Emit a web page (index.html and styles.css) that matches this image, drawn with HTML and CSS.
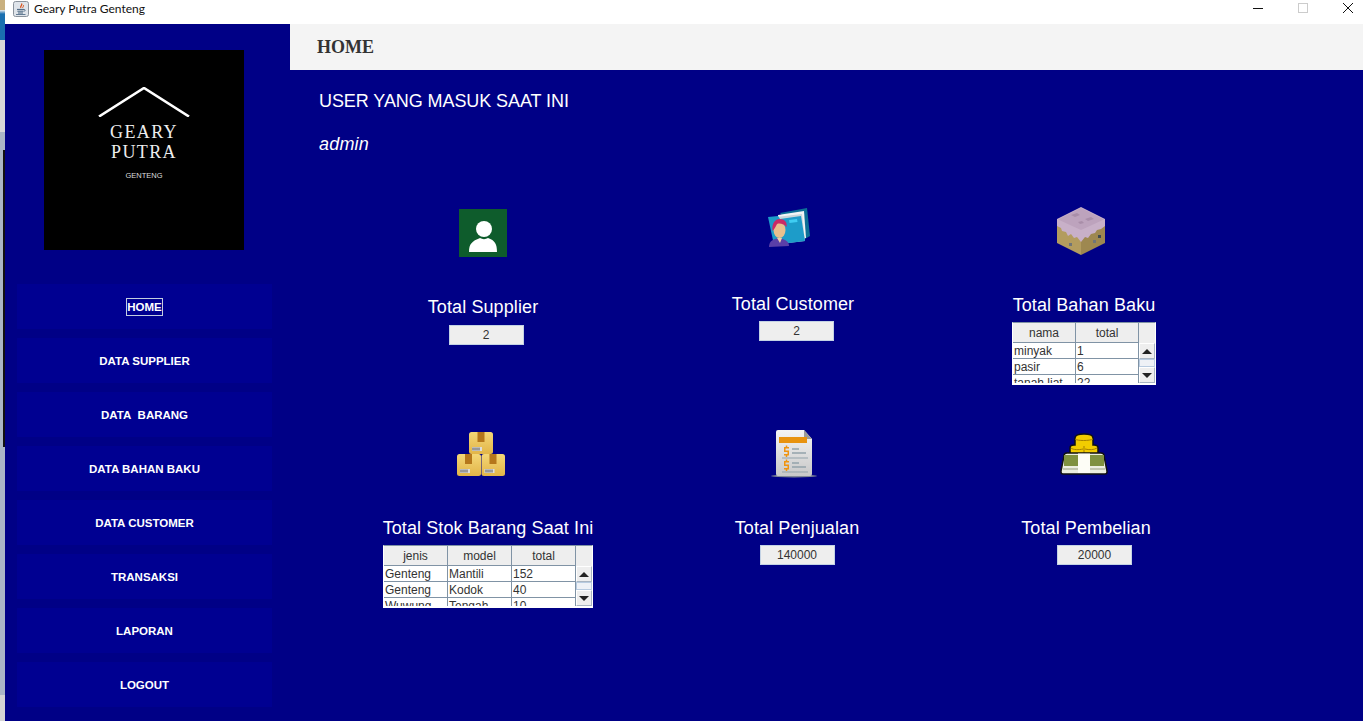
FILE: index.html
```html
<!DOCTYPE html>
<html lang="en">
<head>
    <meta charset="UTF-8">
    <meta name="viewport" content="width=device-width, initial-scale=1.0">
    <title>Geary Putra Genteng</title>
    <link rel="stylesheet" href="styles.css">
</head>
<body>
    <div class="desk-strip"></div>

    <div class="window">
        <div class="titlebar">
            <svg class="java-icon" width="16" height="16" viewBox="0 0 16 16">
                <rect x="0.5" y="0.5" width="15" height="15" rx="2" fill="#dfe4ea" stroke="#8a929c"/>
                <path d="M8.5 2.5c1.5 1.6-1.8 2.6-.6 4.4" fill="none" stroke="#d9531e" stroke-width="1.3"/>
                <path d="M10.4 4.2c.8 1.2-1.2 1.8-.6 2.8" fill="none" stroke="#d9531e" stroke-width="1"/>
                <path d="M4 8.4h7M4.4 10.2h6.2M5 12h5" stroke="#44617d" stroke-width="1"/>
                <path d="M11 8.4c1.6 0 1.6 1.8 0 1.8" fill="none" stroke="#44617d" stroke-width=".8"/>
                <path d="M3 13.5h9.5" stroke="#44617d" stroke-width=".8"/>
            </svg>
            <span class="title-text">Geary Putra Genteng</span>
            <div class="win-controls">
                <svg width="10" height="10" viewBox="0 0 10 10"><path d="M0 5.5h10" stroke="#111" stroke-width="1"/></svg>
                <svg width="10" height="10" viewBox="0 0 10 10"><rect x="0.5" y="0.5" width="9" height="9" fill="none" stroke="#ccc"/></svg>
                <svg width="10" height="10" viewBox="0 0 10 10"><path d="M0 0l10 10M10 0L0 10" stroke="#111" stroke-width="1"/></svg>
            </div>
        </div>

        <div class="window-body">
            <aside class="sidebar">
                <div class="logo">
                    <svg class="logo-roof" width="92" height="30" viewBox="0 0 92 30">
                        <path d="M1 29.500L46 1l45 28.500" fill="none" stroke="#fff" stroke-width="2.600"/>
                    </svg>
                    <div class="logo-name">GEARY<br>PUTRA</div>
                    <div class="logo-sub">GENTENG</div>
                </div>

                <nav class="menu">
                    <a class="menu-btn" href="#"><span class="focused">HOME</span></a>
                    <a class="menu-btn" href="#">DATA SUPPLIER</a>
                    <a class="menu-btn" href="#">DATA&nbsp; BARANG</a>
                    <a class="menu-btn" href="#">DATA BAHAN BAKU</a>
                    <a class="menu-btn" href="#">DATA CUSTOMER</a>
                    <a class="menu-btn" href="#">TRANSAKSI</a>
                    <a class="menu-btn" href="#">LAPORAN</a>
                    <a class="menu-btn" href="#">LOGOUT</a>
                </nav>
            </aside>

            <div class="content">
                <header class="page-head">HOME</header>

                <main class="main">
                    <div class="user-title">USER YANG MASUK SAAT INI</div>
                    <div class="user-name">admin</div>

                    <div class="tiles">
                        <section class="tile tile-supplier">
                            <svg class="icon" width="48" height="48" viewBox="0 0 48 48">
                                <rect width="48" height="48" fill="#0e5c2c"/>
                                <circle cx="25" cy="20" r="8" fill="#fff"/>
                                <path d="M10 43c0-8 3-11 11-14 2.500 1.500 5.500 1.500 8 0 7 2.500 9 6 9 14z" fill="#fff"/>
                            </svg>
                            <div class="tile-label">Total Supplier</div>
                            <div class="value-box">2</div>
                        </section>

                        <section class="tile tile-customer">
                            <svg class="icon" width="42" height="39" viewBox="0 0 42 39">
                                <path d="M12 5L39 0l3 28-7 4z" fill="#0d6f96"/>
                                <path d="M10 7l26-4 2 27-26 3z" fill="#f2f5f6"/>
                                <path d="M8 9l26-3 3 27-26 3z" fill="#c9d6db"/>
                                <path d="M0 9l10-1 2 3 21-3 4 25-31 4z" fill="#1d9cc9"/>
                                <path d="M21 12l8-1 .5 3-8 1z" fill="#3fcdf2"/>
                                <path d="M1 39c0-6 4-8 10-9 5 1 10 3 10 8z" fill="#5a3fa8"/>
                                <path d="M9 30l3 5 2-5z" fill="#f0d0a8"/>
                                <ellipse cx="11.500" cy="22" rx="6" ry="8" fill="#e9c08e"/>
                                <path d="M4.500 23c-1-8 3-12 7-12 5 0 8 3 7 8-2-3-9-5-10-2-1 2-2 4-4 6z" fill="#c92a66"/>
                            </svg>
                            <div class="tile-label">Total Customer</div>
                            <div class="value-box">2</div>
                        </section>

                        <section class="tile tile-bahan">
                            <svg class="icon" width="48" height="48" viewBox="0 0 48 48">
                                <path d="M0 12l24 12v24L0 36z" fill="#b39c5e"/>
                                <path d="M48 12L24 24v24l24-12z" fill="#9e8850"/>
                                <path d="M0 12L24 0l24 12v7l-4 3-4 1-2 3-4 1-3 4-3-1-4 5-4-5-3 1-3-4-3 2-2-4-4-1-1-3-4-2z" fill="#c8b0c8"/>
                                <path d="M24 1l23 11.500L24 23 1 12.500z" fill="#bda3bd"/>
                                <path d="M14 8l6-2 3 2-5 2zM28 12l6-2 3 2-6 2zM21 15l4-1 2 2-4 1z" fill="#a98ea9"/>
                                <rect x="12" y="36" width="3" height="3" fill="#6f7478"/>
                                <rect x="36" y="33" width="3" height="3" fill="#6f7478"/>
                                <rect x="41" y="28" width="3" height="3" fill="#3f4a50"/>
                            </svg>
                            <div class="tile-label">Total Bahan Baku</div>
                            <div class="table-box">
                                <table class="data-table">
                                    <thead>
                                        <tr><th>nama</th><th>total</th></tr>
                                    </thead>
                                    <tbody>
                                        <tr><td>minyak</td><td>1</td></tr>
                                        <tr><td>pasir</td><td>6</td></tr>
                                        <tr><td>tanah liat</td><td>22</td></tr>
                                    </tbody>
                                </table>
                                <div class="scroll">
                                    <div class="scroll-corner"></div>
                                    <div class="scroll-btn"><span class="arrow-up"></span></div>
                                    <div class="scroll-track"></div>
                                    <div class="scroll-btn"><span class="arrow-down"></span></div>
                                </div>
                            </div>
                        </section>

                        <section class="tile tile-stok">
                            <svg class="icon" width="48" height="44" viewBox="0 0 48 44">
                                <defs>
                                    <linearGradient id="box" x1="0" y1="0" x2="0" y2="1">
                                        <stop offset="0" stop-color="#f4d777"/>
                                        <stop offset="1" stop-color="#e2b548"/>
                                    </linearGradient>
                                </defs>
                                <rect x="12" y="0" width="24" height="22" rx="2.500" fill="url(#box)"/>
                                <rect x="0" y="22" width="24" height="22" rx="2.500" fill="url(#box)"/>
                                <rect x="24.500" y="22" width="23.500" height="22" rx="2.500" fill="url(#box)"/>
                                <path d="M20.500 0h7v10h-7zM8 22h7v10H8zM32.500 22h7v10h-7z" fill="#b5771b"/>
                                <rect x="15" y="15" width="10" height="4" fill="#ddd"/>
                                <rect x="3" y="37" width="10" height="4" fill="#ddd"/>
                                <rect x="27.500" y="37" width="10" height="4" fill="#ddd"/>
                                <path d="M16 15.500v3M18 15.500v3M20 15.500v3M22 15.500v3M4 37.500v3M6 37.500v3M8 37.500v3M10 37.500v3M29 37.500v3M31 37.500v3M33 37.500v3M35 37.500v3" stroke="#555" stroke-width="1"/>
                            </svg>
                            <div class="tile-label">Total Stok Barang Saat Ini</div>
                            <div class="table-box table-wide">
                                <table class="data-table">
                                    <thead>
                                        <tr><th>jenis</th><th>model</th><th>total</th></tr>
                                    </thead>
                                    <tbody>
                                        <tr><td>Genteng</td><td>Mantili</td><td>152</td></tr>
                                        <tr><td>Genteng</td><td>Kodok</td><td>40</td></tr>
                                        <tr><td>Wuwung</td><td>Tengah</td><td>10</td></tr>
                                    </tbody>
                                </table>
                                <div class="scroll">
                                    <div class="scroll-corner"></div>
                                    <div class="scroll-btn"><span class="arrow-up"></span></div>
                                    <div class="scroll-track"></div>
                                    <div class="scroll-btn"><span class="arrow-down"></span></div>
                                </div>
                            </div>
                        </section>

                        <section class="tile tile-jual">
                            <svg class="icon" width="46" height="48" viewBox="0 0 46 48">
                                <defs>
                                    <linearGradient id="sheet" x1="0" y1="0" x2="0" y2="1">
                                        <stop offset="0" stop-color="#f4f4f4"/>
                                        <stop offset="1" stop-color="#c8c8c8"/>
                                    </linearGradient>
                                </defs>
                                <ellipse cx="23" cy="46" rx="23" ry="1.500" fill="#7f8796"/>
                                <path d="M7 0h26l8 9v35a2 2 0 0 1-2 2H7a2 2 0 0 1-2-2V2a2 2 0 0 1 2-2z" fill="url(#sheet)"/>
                                <path d="M33 0l8 9h-8z" fill="#9a9a9a"/>
                                <rect x="8" y="7" width="28" height="6" fill="#e8930f"/>
                                <path d="M13 17h5v1.500h-3.500v2H18v5h-5v-1.500h3.500v-2H13zM13 31h5v1.500h-3.500v2H18v5h-5v-1.500h3.500v-2H13z" fill="#ef9410"/>
                                <path d="M15.500 15.500v2M15.500 25v2M15.500 29.500v2M15.500 39v2" stroke="#ef9410" stroke-width="1.500"/>
                                <path d="M21 19h7M21 23h14M21 33h7M21 37h14" stroke="#93a3ab" stroke-width="1.500"/>
                                <path d="M11 28h26M11 42h26" stroke="#93a3ab" stroke-width="1"/>
                            </svg>
                            <div class="tile-label">Total Penjualan</div>
                            <div class="value-box">140000</div>
                        </section>

                        <section class="tile tile-beli">
                            <svg class="icon" width="48" height="42" viewBox="0 0 48 42">
                                <path d="M10 24v-9c0-2 1-3 4-3h1V5c0-3 4-4 9-4s9 1 9 4v7h1c3 0 4 1 4 3v9z" fill="#f2cc00" stroke="#111" stroke-width="1.500"/>
                                <path d="M15 6c2 2 15 2 18 0M11 15c2 2 8 2 12 1M25 16c4 1 9 1 12-1" fill="none" stroke="#a57f00" stroke-width="1"/>
                                <path d="M24 13v10" stroke="#a57f00" stroke-width="1"/>
                                <path d="M1 38l3-15c0-2 1-3 3-3h34c2 0 3 1 3 3l3 15v1c0 1-1 2-2 2H3c-1 0-2-1-2-2z" fill="#ecefe0" stroke="#111" stroke-width="1.500"/>
                                <rect x="4" y="22" width="40" height="11" fill="#7f9140"/>
                                <rect x="18" y="20.500" width="12" height="19.500" fill="#fdfdf6"/>
                                <path d="M3 36h15M30 36h15" stroke="#b4b9a0" stroke-width="1.500"/>
                            </svg>
                            <div class="tile-label">Total Pembelian</div>
                            <div class="value-box">20000</div>
                        </section>
                    </div>
                </main>
            </div>
        </div>
    </div>
</body>
</html>
```

FILE: styles.css
```css
* {
    box-sizing: border-box;
}

body {
    margin: 0;
    width: 1363px;
    height: 721px;
    overflow: hidden;
    display: flex;
    background-color: #000086;
    font-family: "Liberation Sans", Arial, sans-serif;
    color: #fff;
}

.desk-strip {
    width: 5px;
    flex-shrink: 0;
    background:
        linear-gradient(to bottom, transparent 150px, #111 150px, #111 447px, transparent 447px) 3px 0 / 2px 100% no-repeat,
        linear-gradient(to bottom, #c9b07f 0, #c9b07f 10px, #eee 10px, #1a6fb0 14px, #1a6fb0 40px, #d8d8d8 40px, #d8d8d8 132px, #aab6c6 132px, #aab6c6 695px, #d4d4d4 695px);
}

.window {
    flex: 1;
    display: flex;
    flex-direction: column;
    min-width: 0;
}

.titlebar {
    height: 24px;
    flex-shrink: 0;
    display: flex;
    align-items: flex-start;
    background-color: #fff;
    color: #111;
    padding-left: 8px;
}

.java-icon {
    margin-top: 1px;
}

.title-text {
    margin-left: 5px;
    font-family: Lato, sans-serif;
    font-size: 12px;
    line-height: 17px;
}

.win-controls {
    margin-left: auto;
    margin-top: 3px;
    display: flex;
    gap: 35px;
    padding-right: 10px;
}

.window-body {
    flex: 1;
    display: flex;
    min-height: 0;
}

/* sidebar */
.sidebar {
    width: 285px;
    flex-shrink: 0;
    padding: 26px 18px 0 12px;
}

.logo {
    width: 200px;
    height: 200px;
    margin-left: 27px;
    background-color: #000;
    display: flex;
    flex-direction: column;
    align-items: center;
    padding-top: 37px;
}

.logo-roof {
    display: block;
}

.logo-name {
    margin-top: 5px;
    font-family: "Liberation Serif", serif;
    font-size: 18px;
    line-height: 20px;
    letter-spacing: 1.400px;
    text-align: center;
    color: #eee;
}

.logo-sub {
    margin-top: 9px;
    font-size: 7.500px;
    line-height: 10px;
    color: #ddd;
}

.menu {
    margin-top: 34px;
    display: flex;
    flex-direction: column;
    gap: 9px;
}

.menu-btn {
    height: 45px;
    display: flex;
    align-items: center;
    justify-content: center;
    background-color: #000091;
    color: #fff;
    font-size: 11.500px;
    font-weight: bold;
    text-decoration: none;
    white-space: nowrap;
}

.focused {
    border: 1px solid #c3cde0;
    padding: 2px 0;
    line-height: 12px;
}

/* content */
.content {
    flex: 1;
    display: flex;
    flex-direction: column;
    min-width: 0;
}

.page-head {
    height: 46px;
    flex-shrink: 0;
    padding-left: 27px;
    background-color: #f4f4f4;
    color: #333;
    font-family: "Liberation Serif", serif;
    font-size: 18px;
    font-weight: bold;
    line-height: 46px;
}

.main {
    flex: 1;
    padding: 21px 0 0 29px;
}

.user-title,
.user-name {
    font-size: 18px;
    line-height: 21px;
}

.user-title {
    letter-spacing: -0.080px;
}

.user-name {
    margin-top: 22px;
    font-style: italic;
    letter-spacing: 0.200px;
}

/* tiles */
.tiles {
    margin: 52px 0 0 64px;
    display: grid;
    grid-template-columns: 308px 289px 210px;
    grid-auto-rows: 223px;
}

.tile {
    width: 210px;
    display: flex;
    flex-direction: column;
    align-items: center;
}

.icon {
    display: block;
    flex-shrink: 0;
}

.tile-label {
    font-size: 18px;
    line-height: 21px;
    letter-spacing: 0.100px;
    white-space: nowrap;
}

.value-box {
    width: 75px;
    height: 20px;
    margin-top: 6px;
    background-color: #eee;
    border: 1px solid #c3d2e4;
    color: #333;
    font-size: 12px;
    line-height: 18px;
    text-align: center;
}

.tile-supplier {
    padding-top: 2px;
    width: 200px;
}

.tile-supplier .tile-label {
    margin-top: 40px;
}

.tile-supplier .value-box {
    margin-top: 7px;
    margin-left: 6px;
}

.tile-customer {
    padding-top: 1px;
    width: 204px;
}

.tile-customer .icon {
    margin-right: 8px;
}

.tile-customer .tile-label {
    margin-top: 47px;
}

.tile-customer .value-box {
    margin-left: 7px;
}

.tile-bahan {
    width: 208px;
}

.tile-bahan .icon {
    margin-right: 6px;
}

.tile-bahan .tile-label {
    margin-top: 40px;
}

.tile-stok {
    padding-top: 2px;
}

.tile-stok .icon {
    margin-right: 14px;
}

.tile-stok .tile-label {
    margin-top: 42px;
}

.tile-jual {
    width: 212px;
}

.tile-jual .icon {
    margin-right: 6px;
}

.tile-jual .tile-label {
    margin-top: 40px;
}

.tile-beli {
    width: 212px;
    padding-top: 3px;
}

.tile-beli .icon {
    margin-right: 4px;
}

.tile-beli .tile-label {
    margin-top: 43px;
}

.tile-beli .value-box {
    margin-left: 17px;
}

/* small tables */
.table-box {
    width: 144px;
    height: 63px;
    margin-top: 6px;
    flex-shrink: 0;
    display: flex;
    overflow: hidden;
    background-color: #fff;
    border: 1px solid #fff;
    border-bottom-width: 2px;
    border-top-color: #8093a5;
    color: #333;
}

.table-wide {
    width: 210px;
}

.data-table {
    width: 126px;
    flex-shrink: 0;
    align-self: flex-start;
    table-layout: fixed;
    border-collapse: separate;
    border-spacing: 0;
    font-size: 12px;
}

.table-wide .data-table {
    width: 192px;
}

.data-table th {
    height: 20px;
    padding: 0;
    background-color: #eee;
    border-right: 1px solid #8093a5;
    border-bottom: 1px solid #8093a5;
    font-weight: normal;
    text-align: center;
}

.data-table td {
    height: 16px;
    padding: 0 1px;
    border-right: 1px solid #8093a5;
    border-bottom: 1px solid #8093a5;
    white-space: nowrap;
    overflow: hidden;
    line-height: 14px;
}

.scroll {
    width: 16px;
    flex-shrink: 0;
    background-color: #eee;
    display: flex;
    flex-direction: column;
}

.scroll-corner {
    height: 20px;
    flex-shrink: 0;
    border-bottom: 1px solid #eee;
}

.scroll-btn {
    height: 16px;
    flex-shrink: 0;
    display: flex;
    align-items: center;
    justify-content: center;
    background-color: #eee;
    border: 1px solid #fff;
    border-right-color: #a9b5c2;
    border-bottom-color: #a9b5c2;
}

.scroll-track {
    height: 8px;
    flex-shrink: 0;
    background-color: #eef1f6;
    border: 1px solid #b8cbe0;
}

.arrow-up {
    border-left: 5px solid transparent;
    border-right: 5px solid transparent;
    border-bottom: 5px solid #222;
}

.arrow-down {
    border-left: 5px solid transparent;
    border-right: 5px solid transparent;
    border-top: 5px solid #222;
}
```
